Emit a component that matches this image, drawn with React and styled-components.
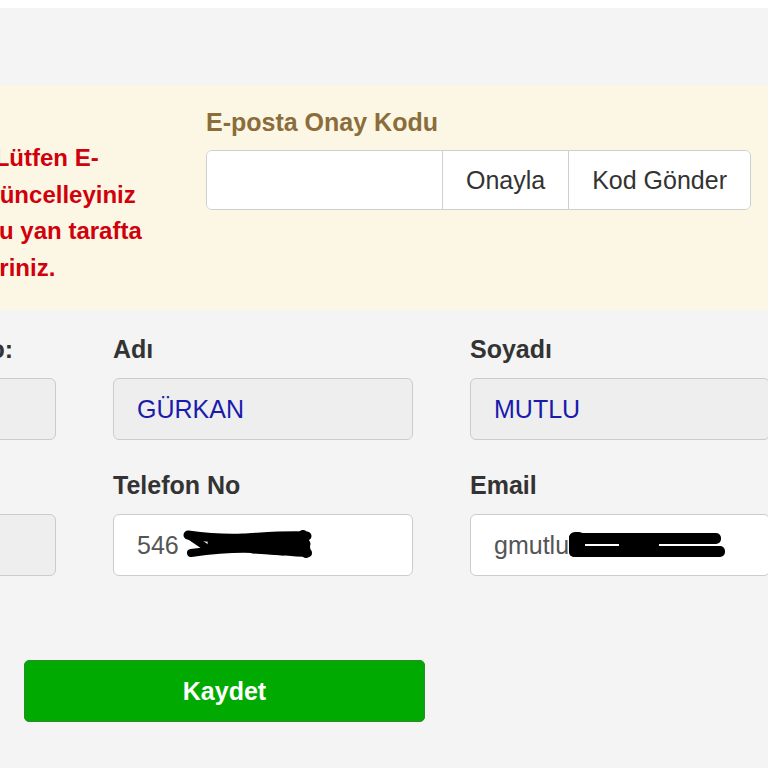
import styled, { createGlobalStyle } from "styled-components";

const GlobalStyle = createGlobalStyle`
  html, body {
    margin: 0;
    padding: 0;
    background: #fff;
  }
  body {
    font-family: "Liberation Sans", Arial, sans-serif;
  }
  * {
    box-sizing: border-box;
  }
`;

const messageLines = [
  { text: "Dikkat! Lütfen E-", indent: -92 },
  { text: "posta adresinizi güncelleyiniz", indent: -203 },
  { text: "ve onay kodunu yan tarafta", indent: -169 },
  { text: "giriniz.", indent: -22 },
];

const PhoneScribble = () => (
  <Scribble width="130" height="30" viewBox="0 0 130 30" $gap={4}>
    <g fill="none" stroke="#000" strokeLinecap="round" strokeLinejoin="round">
      <path d="M5 5 C 20 7, 40 9, 60 8 S 100 5, 124 6" strokeWidth="9" />
      <path d="M8 23 C 30 20, 50 18, 70 19 S 110 23, 125 23" strokeWidth="8" />
      <path d="M30 13 L 122 14" strokeWidth="11" />
      <path d="M120 5 L 123 23" strokeWidth="10" />
      <path d="M5 5 L 24 18" strokeWidth="7" />
      <path d="M70 20 L 100 22" strokeWidth="7" />
    </g>
  </Scribble>
);

const MailScribble = () => (
  <Scribble width="156" height="26" viewBox="0 0 156 26" $gap={0}>
    <g fill="#000">
      <rect x="0" y="1" width="152" height="11" rx="5" />
      <rect x="0" y="14" width="156" height="11" rx="5" />
      <rect x="0" y="0" width="16" height="25" rx="6" />
      <rect x="50" y="9" width="40" height="7" rx="3" />
    </g>
  </Scribble>
);

const App = () => {
  return (
    <>
      <GlobalStyle />
      <Page>
        <Canvas>
          <Notice>
            <Message>
              {messageLines.map((line) => (
                <MessageLine key={line.text} $indent={line.indent}>
                  {line.text}
                </MessageLine>
              ))}
            </Message>
            <ConfirmBox>
              <ConfirmLabel>E-posta Onay Kodu</ConfirmLabel>
              <InputGroup>
                <CodeInput type="text" />
                <GroupButton type="button">Onayla</GroupButton>
                <GroupButton type="button">Kod Gönder</GroupButton>
              </InputGroup>
            </ConfirmBox>
          </Notice>

          <Form>
            <Field>
              <Label>T.C. Kimlik / Vergi No:</Label>
              <Box $locked />
            </Field>
            <Field>
              <Label>Adı</Label>
              <Box $locked>GÜRKAN</Box>
            </Field>
            <Field>
              <Label>Soyadı</Label>
              <Box $locked>MUTLU</Box>
            </Field>
            <Field>
              <Label>Doğum Tarihi</Label>
              <Box $locked />
            </Field>
            <Field>
              <Label>Telefon No</Label>
              <Box>
                546
                <PhoneScribble />
              </Box>
            </Field>
            <Field>
              <Label>Email</Label>
              <Box>
                gmutlu
                <MailScribble />
              </Box>
            </Field>
          </Form>

          <SaveButton type="button">Kaydet</SaveButton>
        </Canvas>
      </Page>
    </>
  );
};

const Page = styled.div`
  width: 768px;
  height: 768px;
  overflow: hidden;
  background: #fff;
  padding-top: 8px;
`;

const Canvas = styled.div`
  height: 100%;
  background: #f4f4f4;
  padding-top: 77px;
`;

const Notice = styled.div`
  display: flex;
  height: 225px;
  padding-top: 19px;
  background: #fcf7e4;
`;

const Message = styled.div`
  flex: none;
  width: 206px;
  padding-top: 36px;
  color: #d0000c;
  font-size: 24px;
  font-weight: bold;
  line-height: 36.7px;
`;

const MessageLine = styled.div`
  white-space: nowrap;
  text-indent: ${(p) => p.$indent}px;
`;

const ConfirmBox = styled.div`
  width: 545px;
`;

const ConfirmLabel = styled.div`
  color: #8a6d3b;
  font-size: 25px;
  font-weight: bold;
  line-height: 36px;
  margin-bottom: 10px;
`;

const InputGroup = styled.div`
  display: flex;
  height: 60px;
  border: 1px solid #cfcfcf;
  border-radius: 6px;
  background: #fff;
  overflow: hidden;
`;

const CodeInput = styled.input`
  flex: 1;
  min-width: 0;
  border: none;
  outline: none;
  padding: 0 20px;
  font: 25px "Liberation Sans", Arial, sans-serif;
  background: #fff;
`;

const GroupButton = styled.button`
  flex: none;
  border: none;
  border-left: 1px solid #cfcfcf;
  padding: 0 23px;
  background: #fff;
  color: #333;
  font: 25px "Liberation Sans", Arial, sans-serif;
`;

const Form = styled.div`
  display: grid;
  grid-template-columns: repeat(3, 300px);
  column-gap: 57px;
  row-gap: 27px;
  margin: 21px 0 0 -244px;
`;

const Field = styled.div`
  display: flex;
  flex-direction: column;
`;

const Label = styled.div`
  color: #333;
  font-size: 25px;
  font-weight: bold;
  line-height: 36px;
  margin-bottom: 11px;
  white-space: nowrap;
`;

const Box = styled.div`
  display: flex;
  align-items: center;
  height: 62px;
  padding: 0 23px;
  border: 1px solid #cccccc;
  border-radius: 6px;
  background: ${(p) => (p.$locked ? "#eeeeee" : "#ffffff")};
  color: ${(p) => (p.$locked ? "#1a1aad" : "#555555")};
  font-size: 25px;
  white-space: nowrap;
`;

const Scribble = styled.svg`
  display: block;
  flex: none;
  margin-left: ${(p) => p.$gap}px;
`;

const SaveButton = styled.button`
  display: block;
  width: 401px;
  height: 62px;
  margin: 84px 0 0 24px;
  border: 1px solid #2b8a2b;
  border-radius: 5px;
  background: #00aa00;
  color: #fff;
  font: bold 25px "Liberation Sans", Arial, sans-serif;
`;

export default App;
